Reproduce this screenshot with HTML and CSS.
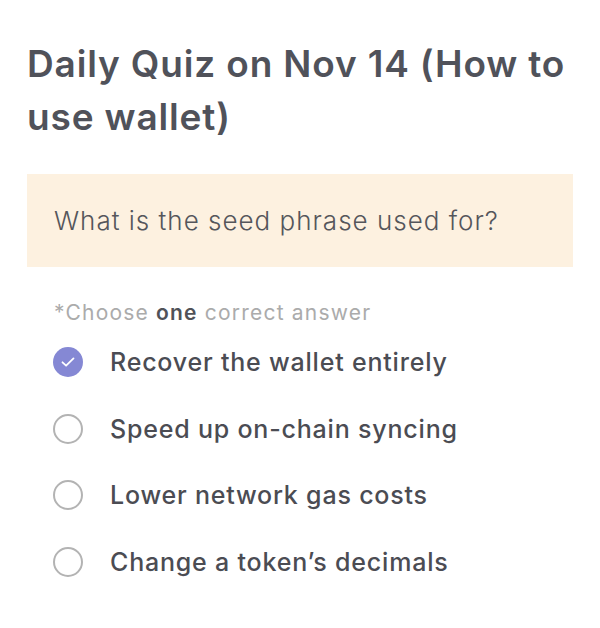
FILE: index.html
```html
<!DOCTYPE html>
<html lang="en">

<head>
  <meta charset="UTF-8" />
  <meta name="viewport" content="width=device-width, initial-scale=1.0" />
  <title>Daily Quiz</title>
  <link rel="stylesheet" href="styles.css">
</head>

<body>
  <div class="quiz">
    <h1 class="quiz-title">Daily Quiz on Nov 14 (How to use wallet)</h1>

    <div class="question">What is the seed phrase used for?</div>

    <p class="hint">*Choose <b>one</b> correct answer</p>

    <ul class="options">
      <li class="option checked">
        <span class="radio">
          <svg width="18" height="18" viewBox="0 0 18 18"><path d="M3.5 9.3l3.6 3.4L14.5 5.4" fill="none" stroke="#fff" stroke-width="1.8" stroke-linecap="round" stroke-linejoin="round"/></svg>
        </span>
        Recover the wallet entirely
      </li>
      <li class="option"><span class="radio"></span>Speed up on-chain syncing</li>
      <li class="option"><span class="radio"></span>Lower network gas costs</li>
      <li class="option"><span class="radio"></span>Change a token’s decimals</li>
    </ul>
  </div>
</body>

</html>
```

FILE: styles.css
```css
body {
  margin: 0;
  font-family: Inter, 'Noto Sans', sans-serif;
  background-color: #fff;
}

.quiz {
  padding: 37px 27px 0 27px;
}

.quiz-title {
  margin: 0;
  font-size: 37px;
  line-height: 53px;
  font-weight: 600;
  letter-spacing: 0.85px;
  color: #50525a;
}

.question {
  margin-top: 31px;
  height: 93px;
  padding: 0 27px;
  display: flex;
  align-items: center;
  background-color: #fdf1e0;
  font-size: 26px;
  font-weight: 300;
  letter-spacing: 1px;
  color: #55565b;
}

.hint {
  margin: 33px 0 0 27px;
  font-size: 21px;
  letter-spacing: 1.2px;
  color: #ababab;
}

.hint b {
  font-weight: 600;
  color: #505258;
}

.options {
  list-style: none;
  margin: 4px 0 0 0;
  padding: 0 0 0 26px;
}

.option {
  display: flex;
  align-items: center;
  gap: 27px;
  height: 66.5px;
  font-size: 25px;
  font-weight: 500;
  letter-spacing: 0.8px;
  color: #4b4c53;
}

.radio {
  flex-shrink: 0;
  width: 30px;
  height: 30px;
  box-sizing: border-box;
  border: 2px solid #b3b3b3;
  border-radius: 50%;
  display: flex;
  align-items: center;
  justify-content: center;
}

.checked .radio {
  border: none;
  background-color: #8588d4;
}
```
